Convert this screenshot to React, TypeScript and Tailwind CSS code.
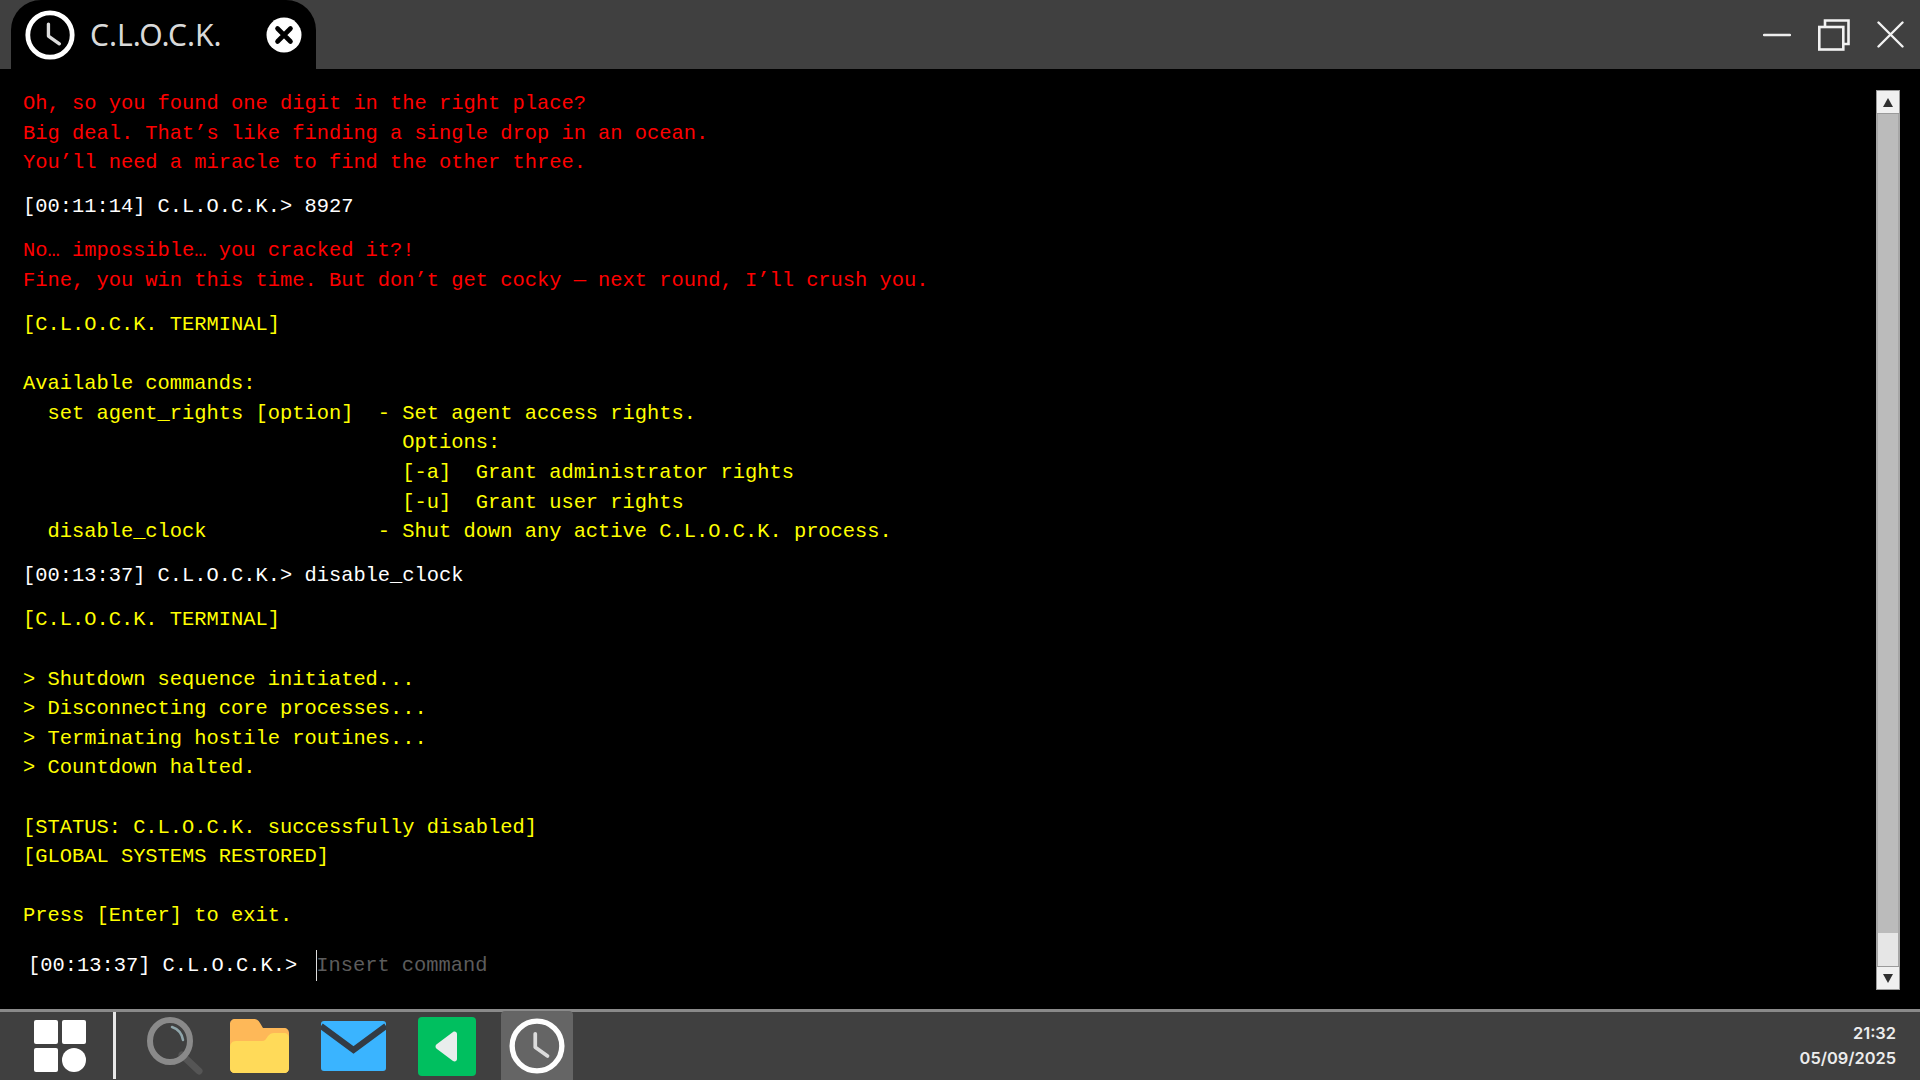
const mono = 'font-["Liberation_Mono",monospace]';

type Block = { color: string; lines: string[] };

const blocks: Block[] = [
  {
    color: 'text-[#ff0000]',
    lines: [
      'Oh, so you found one digit in the right place?',
      'Big deal. That’s like finding a single drop in an ocean.',
      'You’ll need a miracle to find the other three.',
    ],
  },
  { color: 'text-white', lines: ['[00:11:14] C.L.O.C.K.> 8927'] },
  {
    color: 'text-[#ff0000]',
    lines: [
      'No… impossible… you cracked it?!',
      'Fine, you win this time. But don’t get cocky — next round, I’ll crush you.',
    ],
  },
  {
    color: 'text-[#ffff00]',
    lines: [
      '[C.L.O.C.K. TERMINAL]',
      '',
      'Available commands:',
      '  set agent_rights [option]  - Set agent access rights.',
      '                               Options:',
      '                               [-a]  Grant administrator rights',
      '                               [-u]  Grant user rights',
      '  disable_clock              - Shut down any active C.L.O.C.K. process.',
    ],
  },
  { color: 'text-white', lines: ['[00:13:37] C.L.O.C.K.> disable_clock'] },
  {
    color: 'text-[#ffff00]',
    lines: [
      '[C.L.O.C.K. TERMINAL]',
      '',
      '> Shutdown sequence initiated...',
      '> Disconnecting core processes...',
      '> Terminating hostile routines...',
      '> Countdown halted.',
      '',
      '[STATUS: C.L.O.C.K. successfully disabled]',
      '[GLOBAL SYSTEMS RESTORED]',
      '',
      'Press [Enter] to exit.',
    ],
  },
];

function ClockIcon({ size }: { size: number }) {
  return (
    <svg width={size} height={size} viewBox="0 0 48 48" fill="none" stroke="#fff" strokeLinecap="round">
      <circle cx="24" cy="24" r="21.3" strokeWidth="4.6" />
      <path d="M22.5 13.5V25l10.5 7.5" strokeWidth="3.2" strokeLinejoin="round" stroke="#dcdcdc" />
    </svg>
  );
}

function ScrollButton({ down }: { down?: boolean }) {
  return (
    <div className="flex h-6 items-center justify-center border border-[#9a9a9a] bg-[#f0f0f0]">
      <svg width="10" height="9" viewBox="0 0 10 9" fill="#2f2f2f">
        <path d={down ? 'M0 0h10L5 9z' : 'M5 0l5 9H0z'} />
      </svg>
    </div>
  );
}

export default function App() {
  return (
    <div className="flex h-screen w-full flex-col overflow-hidden bg-black">
      <div className="flex h-[69px] shrink-0 items-end justify-between bg-[#404040]">
        <div className="ml-[11px] flex h-[69px] w-[305px] items-center rounded-t-[30px] bg-black pl-[14px]">
          <ClockIcon size={50} />
          <span className='ml-[15px] font-["Noto_Sans",sans-serif] text-[30px] text-[#d9d9d9]'>C.L.O.C.K.</span>
          <svg className="ml-[44px]" width="36" height="36" viewBox="0 0 36 36">
            <circle cx="18" cy="18" r="17.5" fill="#fff" />
            <path d="M11.5 11.5l13 13M24.5 11.5l-13 13" stroke="#000" strokeWidth="4.6" strokeLinecap="round" />
          </svg>
        </div>
        <div className="flex h-[69px] items-center gap-[27px] pr-[16px]">
          <svg width="28" height="4" viewBox="0 0 28 4">
            <path d="M1 2h26" stroke="#eee" strokeWidth="2.4" strokeLinecap="round" />
          </svg>
          <svg width="32" height="32" viewBox="0 0 32 32" fill="none" stroke="#f2f2f2" strokeWidth="2.6">
            <rect x="1.3" y="8" width="24" height="22.5" />
            <path d="M7 8V1.5h23.5V25h-5" />
          </svg>
          <svg width="27" height="27" viewBox="0 0 27 27">
            <path d="M1.5 1.5l24 24M25.5 1.5l-24 24" stroke="#f2f2f2" strokeWidth="2.4" strokeLinecap="round" />
          </svg>
        </div>
      </div>

      <div className="flex min-h-0 flex-1">
        <div className={`flex min-w-0 flex-1 flex-col pl-[23px] pt-[20px] text-[20.4px] leading-[29.6px] ${mono}`}>
          {blocks.map((b, i) => (
            <div key={i} className={`mb-[14.5px] ${b.color}`}>
              {b.lines.map((l, j) => (
                <div key={j} className="h-[29.6px] whitespace-pre">
                  {l}
                </div>
              ))}
            </div>
          ))}
          <div className="mt-[4px] flex h-[32px] items-center pl-[5px] text-white">
            <span className="whitespace-pre">[00:13:37] C.L.O.C.K.&gt;</span>
            <div className="ml-[19px] h-[31px] w-px bg-[#dddddd]" />
            <span className="-ml-px text-[#5c5c5c]">Insert command</span>
          </div>
        </div>
        <div className="mr-[20px] mt-[21px] flex h-[900px] w-[24px] flex-col bg-[#bbbbbb]">
          <ScrollButton />
          <div className="flex flex-1 flex-col justify-end border-x-2 border-[#a6a6a6]">
            <div className="h-[33px] bg-[#e6e6e6]" />
          </div>
          <ScrollButton down />
        </div>
      </div>

      <div className="flex h-[71px] shrink-0 items-center border-t-[3px] border-[#8a8a8a] bg-[#404040] pl-[34px] pr-[24px]">
        <svg width="52" height="52" viewBox="0 0 52 52" fill="#fff">
          <rect x="0" y="0" width="24" height="24" rx="2" />
          <rect x="28" y="0" width="24" height="24" rx="2" />
          <rect x="0" y="28" width="24" height="24" rx="2" />
          <circle cx="40" cy="40" r="12" />
        </svg>
        <div className="ml-[27px] h-[67px] w-[3px] self-start bg-[#e8e8e8]" />
        <svg className="ml-[30px]" width="58" height="58" viewBox="0 0 58 58" fill="none">
          <path d="M36 38l17 16" stroke="#555" strokeWidth="7" strokeLinecap="round" />
          <ellipse cx="24" cy="24" rx="20" ry="21" stroke="#8a8a8a" strokeWidth="6" />
          <path d="M26 10c6 2 10 7 11 13" stroke="#8fa5aa" strokeWidth="2.5" strokeLinecap="round" />
        </svg>
        <svg className="ml-[26px]" width="59" height="54" viewBox="0 0 59 54">
          <path d="M5 0h19c3 0 4 1 6 4l3 5h21c3 0 5 2 5 5v35c0 3-2 5-5 5H5c-3 0-5-2-5-5V5c0-3 2-5 5-5z" fill="#feb858" />
          <path d="M6 22h26c3 0 4-2 6-5 2-2 3-3 6-3h10c3 0 5 2 5 5v30c0 3-2 5-5 5H5c-3 0-5-2-5-5V28c0-3 2-6 6-6z" fill="#ffda59" />
        </svg>
        <svg className="ml-[32px]" width="65" height="50" viewBox="0 0 65 50">
          <rect x="0" y="0" width="65" height="50" rx="3" fill="#3ab4ff" />
          <path d="M0 5l32.5 24L65 5" fill="none" stroke="#333b44" strokeWidth="6" />
        </svg>
        <svg className="ml-[32px]" width="58" height="59" viewBox="0 0 58 59">
          <rect width="58" height="59" rx="4" fill="#00bf5f" />
          <path d="M39 17v25c0 2-2 3-4 2L19 32c-2-1-2-4 0-5l16-12c2-1 4 0 4 2z" fill="#e9eded" />
        </svg>
        <div className="ml-[25px] flex h-[69px] w-[72px] items-center justify-center self-end rounded-t-[4px] bg-[#656565]">
          <ClockIcon size={56} />
        </div>
        <div className='ml-auto text-right font-["Inter",sans-serif] text-[16.4px] font-semibold leading-[25px] text-[#ececec]'>
          <div>21:32</div>
          <div>05/09/2025</div>
        </div>
      </div>
    </div>
  );
}
